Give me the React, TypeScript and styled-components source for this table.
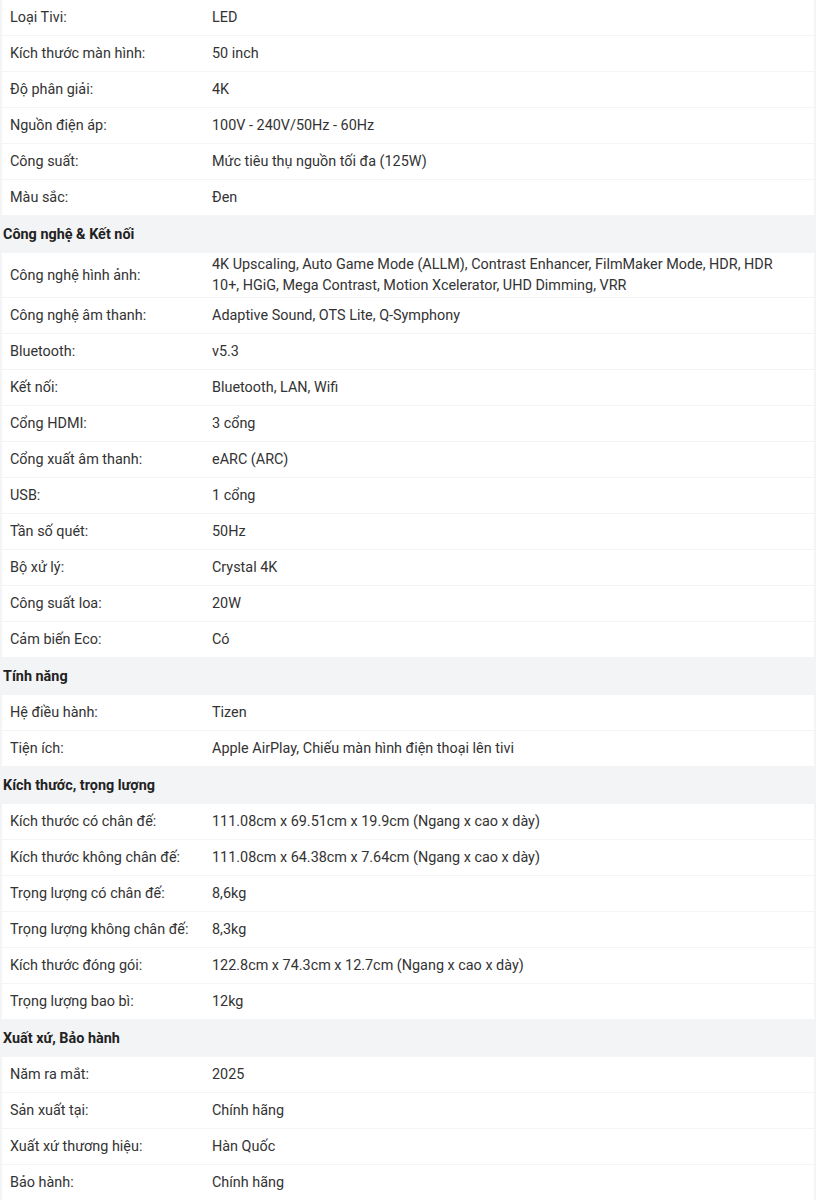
import styled, { createGlobalStyle } from 'styled-components';

type Spec = { label: string; value: string };
type Group = { title?: string; rows: Spec[] };

const GROUPS: Group[] = [
  {
    rows: [
      { label: 'Loại Tivi:', value: 'LED' },
      { label: 'Kích thước màn hình:', value: '50 inch' },
      { label: 'Độ phân giải:', value: '4K' },
      { label: 'Nguồn điện áp:', value: '100V - 240V/50Hz - 60Hz' },
      { label: 'Công suất:', value: 'Mức tiêu thụ nguồn tối đa (125W)' },
      { label: 'Màu sắc:', value: 'Đen' }
    ]
  },
  {
    title: 'Công nghệ & Kết nối',
    rows: [
      {
        label: 'Công nghệ hình ảnh:',
        value:
          '4K Upscaling, Auto Game Mode (ALLM), Contrast Enhancer, FilmMaker Mode, HDR, HDR 10+, HGiG, Mega Contrast, Motion Xcelerator, UHD Dimming, VRR'
      },
      { label: 'Công nghệ âm thanh:', value: 'Adaptive Sound, OTS Lite, Q-Symphony' },
      { label: 'Bluetooth:', value: 'v5.3' },
      { label: 'Kết nối:', value: 'Bluetooth, LAN, Wifi' },
      { label: 'Cổng HDMI:', value: '3 cổng' },
      { label: 'Cổng xuất âm thanh:', value: 'eARC (ARC)' },
      { label: 'USB:', value: '1 cổng' },
      { label: 'Tần số quét:', value: '50Hz' },
      { label: 'Bộ xử lý:', value: 'Crystal 4K' },
      { label: 'Công suất loa:', value: '20W' },
      { label: 'Cảm biến Eco:', value: 'Có' }
    ]
  },
  {
    title: 'Tính năng',
    rows: [
      { label: 'Hệ điều hành:', value: 'Tizen' },
      { label: 'Tiện ích:', value: 'Apple AirPlay, Chiếu màn hình điện thoại lên tivi' }
    ]
  },
  {
    title: 'Kích thước, trọng lượng',
    rows: [
      { label: 'Kích thước có chân đế:', value: '111.08cm x 69.51cm x 19.9cm (Ngang x cao x dày)' },
      { label: 'Kích thước không chân đế:', value: '111.08cm x 64.38cm x 7.64cm (Ngang x cao x dày)' },
      { label: 'Trọng lượng có chân đế:', value: '8,6kg' },
      { label: 'Trọng lượng không chân đế:', value: '8,3kg' },
      { label: 'Kích thước đóng gói:', value: '122.8cm x 74.3cm x 12.7cm (Ngang x cao x dày)' },
      { label: 'Trọng lượng bao bì:', value: '12kg' }
    ]
  },
  {
    title: 'Xuất xứ, Bảo hành',
    rows: [
      { label: 'Năm ra mắt:', value: '2025' },
      { label: 'Sản xuất tại:', value: 'Chính hãng' },
      { label: 'Xuất xứ thương hiệu:', value: 'Hàn Quốc' },
      { label: 'Bảo hành:', value: 'Chính hãng' }
    ]
  }
];

const GlobalStyle = createGlobalStyle`
  body {
    margin: 0;
    background: #f3f4f6;
    font-family: Roboto, "Liberation Sans", Arial, sans-serif;
    color: #333;
  }
`;

export default function App() {
  return (
    <>
      <GlobalStyle />
      <SpecTable>
        {GROUPS.map((group, gi) => (
          <section key={gi}>
            {group.title && <GroupTitle>{group.title}</GroupTitle>}
            {group.rows.map((row) => (
              <SpecRow key={row.label}>
                <Label>{row.label}</Label>
                <Value>{row.value}</Value>
              </SpecRow>
            ))}
          </section>
        ))}
      </SpecTable>
    </>
  );
}

const SpecTable = styled.div`
  width: 816px;
  box-sizing: border-box;
  padding: 0 2px;
  background: #f3f4f6;
  font-size: 14.4px;
`;

const GroupTitle = styled.h3`
  margin: 0;
  height: 37px;
  display: flex;
  align-items: center;
  padding: 0 1px;
  font-size: 14.4px;
  font-weight: 700;
  color: #222;
`;

const SpecRow = styled.div`
  display: grid;
  grid-template-columns: 202px 1fr;
  align-items: center;
  min-height: 35px;
  margin-bottom: 1px;
  background: #fff;
  line-height: 21px;
`;

const Label = styled.div`
  padding: 1px 8px;
  color: #333;
`;

const Value = styled.div`
  padding: 1px 32px 1px 8px;
  color: #333;
`;
